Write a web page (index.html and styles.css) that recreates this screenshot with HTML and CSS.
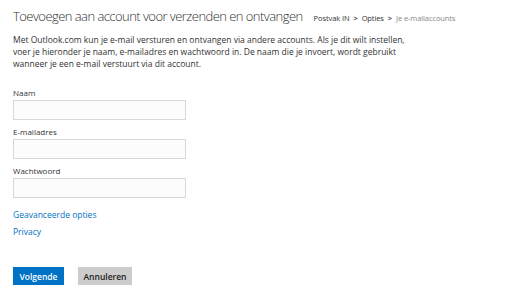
FILE: index.html
```html
<!DOCTYPE html>
<html lang="nl">
<head>
<meta charset="utf-8">
<link rel="stylesheet" href="styles.css">
</head>
<body>
<div class="page">
  <div class="header">
    <h1 class="title">Toevoegen aan account voor verzenden en ontvangen</h1>
    <nav class="crumbs">
      <a class="crumb">Postvak IN</a><span class="sep">&gt;</span><a class="crumb">Opties</a><span class="sep">&gt;</span><span class="current">Je e-mailaccounts</span>
    </nav>
  </div>
  <p class="intro">Met Outlook.com kun je e-mail versturen en ontvangen via andere accounts. Als je dit wilt instellen,<br>voer je hieronder je naam, e-mailadres en wachtwoord in. De naam die je invoert, wordt gebruikt<br>wanneer je een e-mail verstuurt via dit account.</p>
  <div class="form">
    <label class="field"><span class="label">Naam</span><input class="input" type="text"></label>
    <label class="field"><span class="label">E-mailadres</span><input class="input" type="text"></label>
    <label class="field"><span class="label">Wachtwoord</span><input class="input" type="password"></label>
  </div>
  <div class="links">
    <a class="link">Geavanceerde opties</a>
    <a class="link">Privacy</a>
  </div>
  <div class="buttons">
    <button class="btn primary">Volgende</button>
    <button class="btn secondary">Annuleren</button>
  </div>
</div>
</body>
</html>
```
FILE: styles.css
```css
html, body { margin: 0; padding: 0; background: #fff; }
body { font-family: "Open Sans", "Noto Sans", sans-serif; color: #333; }
.page { padding: 7px 13px 0 13px; }
.header { display: flex; align-items: baseline; white-space: nowrap; }
.title { font-weight: 300; font-size: 13px; letter-spacing: -0.55px; margin: 0; color: #333; line-height: 18px; }
.crumbs { margin-left: 11px; font-size: 7.5px; display: flex; align-items: baseline; letter-spacing: -0.1px; }
.crumb { color: #333; }
.sep { margin: 0 4px; font-weight: 700; color: #444; }
.current { color: #888; }
.intro { margin: 9px 0 0 0; font-size: 8.5px; line-height: 12px; color: #333; }
.form { margin-top: 18px; display: flex; flex-direction: column; gap: 7px; }
.field { display: flex; flex-direction: column; }
.label { font-size: 8px; line-height: 10px; margin-bottom: 2px; color: #333; }
.input { width: 173px; height: 20px; box-sizing: border-box; border: 1.5px solid #d8d8d8; background: #fcfcfc; margin: 0; padding: 0; }
.links { margin-top: 12px; display: flex; flex-direction: column; gap: 7px; }
.link { color: #0072c6; font-size: 8.5px; line-height: 10px; }
.buttons { margin-top: 30px; display: flex; gap: 14px; }
.btn { font-family: inherit; font-size: 8.5px; font-weight: 600; border: none; height: 18px; padding: 0; margin: 0; }
.primary { background: #0072c6; color: #fff; width: 51px; }
.secondary { background: #ccc; color: #222; width: 54px; }
```
